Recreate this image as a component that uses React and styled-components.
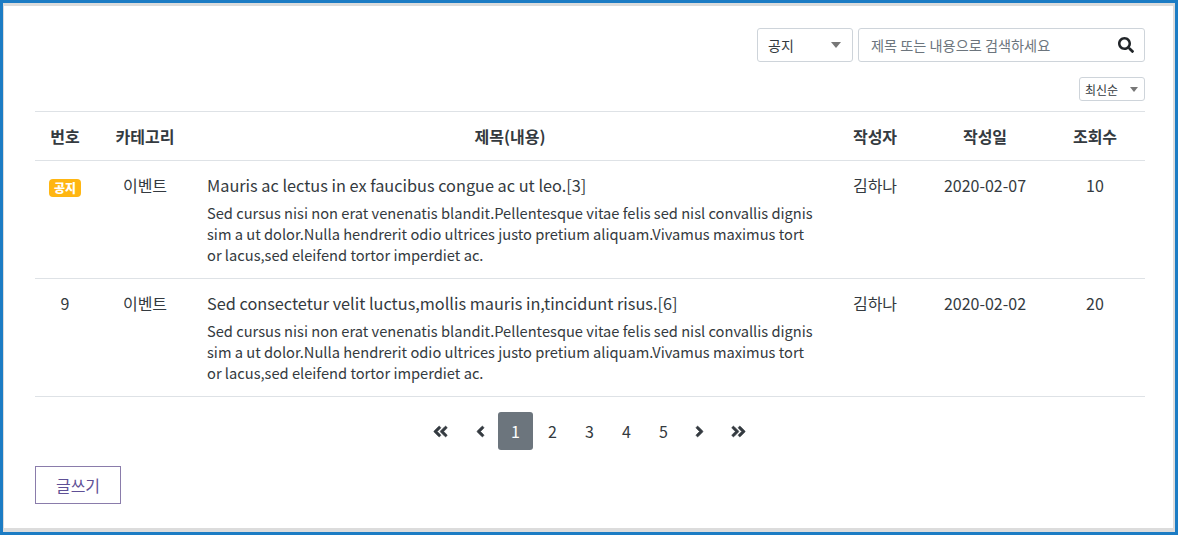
import React from 'react';
import styled, { createGlobalStyle } from 'styled-components';
import { FaSearch, FaAngleLeft, FaAngleRight, FaAngleDoubleLeft, FaAngleDoubleRight } from 'react-icons/fa';

const GlobalStyle = createGlobalStyle`
  * { box-sizing: border-box; }
  html, body { margin: 0; padding: 0; background: #fff; }
  body {
    font-family: "Noto Sans CJK KR", "Noto Sans", sans-serif;
    color: #343a40;
  }
`;

const Frame = styled.div`
  width: 1178px;
  height: 535px;
  border: 3px solid #1c7cc4;
  overflow: hidden;
`;

const Panel = styled.div`
  height: 100%;
  border-style: solid;
  border-color: #dcdcdc;
  border-width: 3px 2px 4px 1px;
  padding: 22px 28px 0 31px;
`;

const SearchBar = styled.div`
  display: flex;
  justify-content: flex-end;
  gap: 5px;
`;

const Field = styled.div`
  display: flex;
  align-items: center;
  justify-content: space-between;
  width: ${(p) => p.$width}px;
  height: ${(p) => p.$height}px;
  padding: 0 ${(p) => p.$pad}px 0 ${(p) => p.$left}px;
  background: #fff;
  border: 1px solid #ced4da;
  border-radius: 3px;
  font-size: ${(p) => p.$size}px;
  color: #343a40;
`;

const Caret = styled.span`
  width: 0;
  height: 0;
  border-left: ${(p) => p.$half}px solid transparent;
  border-right: ${(p) => p.$half}px solid transparent;
  border-top: ${(p) => p.$tall}px solid #777;
`;

const SearchField = styled(Field)`
  color: #6c757d;
  svg { color: #212529; font-size: 16px; }
`;

const SortBar = styled.div`
  display: flex;
  justify-content: flex-end;
  margin-top: 15px;
`;

const Table = styled.div`
  margin-top: 10px;
  border-top: 1px solid #dee2e6;
`;

const Row = styled.div`
  display: grid;
  grid-template-columns: 60px 100px 630px 100px 120px 100px;
  border-bottom: 1px solid #dee2e6;
`;

const HeadCell = styled.div`
  height: 48px;
  display: flex;
  align-items: center;
  justify-content: center;
  font-size: 16px;
  font-weight: 700;
  color: #343a40;
`;

const Cell = styled.div`
  height: 117px;
  padding-top: 12px;
  text-align: center;
  font-size: 16px;
  line-height: 24px;
  color: #343a40;
`;

const TitleCell = styled.div`
  height: 117px;
  padding: 12px 0 0 12px;
`;

const PostTitle = styled.div`
  font-size: 16.3px;
  line-height: 24px;
  color: #343a40;
`;

const PostBody = styled.div`
  margin-top: 5px;
  font-size: 14.66px;
  line-height: 21px;
  white-space: nowrap;
  color: #343a40;
`;

const Badge = styled.span`
  display: inline-flex;
  align-items: center;
  justify-content: center;
  width: 32px;
  height: 18px;
  margin-top: 6px;
  background: #ffb612;
  border-radius: 4px;
  font-size: 12px;
  font-weight: 900;
  color: #fff;
`;

const Pager = styled.div`
  display: flex;
  justify-content: center;
  align-items: center;
  margin-top: 15px;
  padding-right: 2px;
`;

const PageItem = styled.div`
  width: ${(p) => p.$width || 37}px;
  height: 38px;
  display: flex;
  align-items: center;
  justify-content: center;
  font-size: 16px;
  color: #343a40;
  svg { font-size: 17px; stroke: currentColor; stroke-width: 18; }
`;

const ActivePage = styled(PageItem)`
  width: 35px;
  margin-right: 1px;
  background: #6c757d;
  border-radius: 3px;
  color: #fff;
`;

const WriteButton = styled.button`
  display: block;
  width: 86px;
  height: 38px;
  margin-top: 16px;
  background: #fff;
  border: 1px solid #8a7cab;
  border-radius: 0;
  font-family: inherit;
  font-size: 16px;
  color: #5f5096;
`;

const columns = ['번호', '카테고리', '제목(내용)', '작성자', '작성일', '조회수'];

const bodyText = [
  'Sed cursus nisi non erat venenatis blandit.Pellentesque vitae felis sed nisl convallis dignis',
  'sim a ut dolor.Nulla hendrerit odio ultrices justo pretium aliquam.Vivamus maximus tort',
  'or lacus,sed eleifend tortor imperdiet ac.',
];

const posts = [
  { no: null, title: 'Mauris ac lectus in ex faucibus congue ac ut leo.[3]', date: '2020-02-07', views: 10 },
  { no: 9, title: 'Sed consectetur velit luctus,mollis mauris in,tincidunt risus.[6]', date: '2020-02-02', views: 20 },
];

export default function App() {
  return (
    <Frame>
      <GlobalStyle />
      <Panel>
        <SearchBar>
          <Field $width={96} $height={34} $left={10} $pad={11} $size={14}>
            공지
            <Caret $half={5} $tall={6} />
          </Field>
          <SearchField $width={287} $height={34} $left={12} $pad={10} $size={14.2}>
            제목 또는 내용으로 검색하세요
            <FaSearch />
          </SearchField>
        </SearchBar>
        <SortBar>
          <Field $width={66} $height={24} $left={5} $pad={6} $size={12}>
            최신순
            <Caret $half={4} $tall={5} />
          </Field>
        </SortBar>
        <Table>
          <Row>
            {columns.map((name) => (
              <HeadCell key={name}>{name}</HeadCell>
            ))}
          </Row>
          {posts.map((post) => (
            <Row key={post.title}>
              <Cell>{post.no === null ? <Badge>공지</Badge> : post.no}</Cell>
              <Cell>이벤트</Cell>
              <TitleCell>
                <PostTitle>{post.title}</PostTitle>
                <PostBody>
                  {bodyText.map((line) => (
                    <div key={line}>{line}</div>
                  ))}
                </PostBody>
              </TitleCell>
              <Cell>김하나</Cell>
              <Cell>{post.date}</Cell>
              <Cell>{post.views}</Cell>
            </Row>
          ))}
        </Table>
        <Pager>
          <PageItem $width={44}><FaAngleDoubleLeft /></PageItem>
          <PageItem $width={36}><FaAngleLeft /></PageItem>
          <ActivePage>1</ActivePage>
          {[2, 3, 4, 5].map((n) => (
            <PageItem key={n}>{n}</PageItem>
          ))}
          <PageItem $width={35}><FaAngleRight /></PageItem>
          <PageItem $width={43}><FaAngleDoubleRight /></PageItem>
        </Pager>
        <WriteButton>글쓰기</WriteButton>
      </Panel>
    </Frame>
  );
}
